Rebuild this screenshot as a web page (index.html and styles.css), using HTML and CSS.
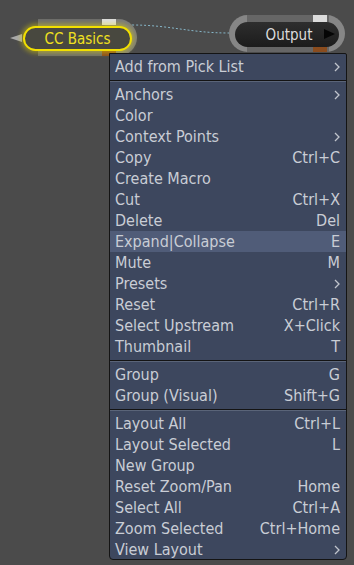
FILE: index.html
```html
<!DOCTYPE html>
<html lang="en">
<head>
    <meta charset="UTF-8">
    <title>Node Graph - Context Menu</title>
    <link rel="stylesheet" href="styles.css">
</head>
<body>
    <!-- Node graph canvas -->
    <div id="graph">
        <svg class="wire" width="354" height="60" viewBox="0 0 354 60">
            <path d="M132 25 C 170 25, 190 33, 229 33" />
        </svg>

        <!-- CC Basics node -->
        <div class="node node-fx">
            <div class="node-arrow"></div>
            <div class="node-back"></div>
            <div class="node-cap"></div>
            <div class="node-port port-in"></div>
            <div class="node-port port-out"></div>
            <div class="node-pill">CC Basics</div>
        </div>

        <!-- Output node -->
        <div class="node node-out">
            <div class="node-ring"></div>
            <div class="node-back"></div>
            <div class="node-port port-in"></div>
            <div class="node-port port-out"></div>
            <div class="node-pill">Output<span class="play"></span></div>
        </div>
    </div>

    <!-- Context menu -->
    <ul class="menu">
        <li class="item">Add from Pick List<svg class="sub" width="6" height="10" viewBox="0 0 6 10"><path d="M1 1 L5 5 L1 9"/></svg></li>
        <li class="sep"></li>
        <li class="item">Anchors<svg class="sub" width="6" height="10" viewBox="0 0 6 10"><path d="M1 1 L5 5 L1 9"/></svg></li>
        <li class="item">Color</li>
        <li class="item">Context Points<svg class="sub" width="6" height="10" viewBox="0 0 6 10"><path d="M1 1 L5 5 L1 9"/></svg></li>
        <li class="item">Copy<span class="key">Ctrl+C</span></li>
        <li class="item">Create Macro</li>
        <li class="item">Cut<span class="key">Ctrl+X</span></li>
        <li class="item">Delete<span class="key">Del</span></li>
        <li class="item active">Expand|Collapse<span class="key">E</span></li>
        <li class="item">Mute<span class="key">M</span></li>
        <li class="item">Presets<svg class="sub" width="6" height="10" viewBox="0 0 6 10"><path d="M1 1 L5 5 L1 9"/></svg></li>
        <li class="item">Reset<span class="key">Ctrl+R</span></li>
        <li class="item">Select Upstream<span class="key">X+Click</span></li>
        <li class="item">Thumbnail<span class="key">T</span></li>
        <li class="sep"></li>
        <li class="item">Group<span class="key">G</span></li>
        <li class="item">Group (Visual)<span class="key">Shift+G</span></li>
        <li class="sep"></li>
        <li class="item">Layout All<span class="key">Ctrl+L</span></li>
        <li class="item">Layout Selected<span class="key">L</span></li>
        <li class="item">New Group</li>
        <li class="item">Reset Zoom/Pan<span class="key">Home</span></li>
        <li class="item">Select All<span class="key">Ctrl+A</span></li>
        <li class="item">Zoom Selected<span class="key">Ctrl+Home</span></li>
        <li class="item">View Layout<svg class="sub" width="6" height="10" viewBox="0 0 6 10"><path d="M1 1 L5 5 L1 9"/></svg></li>
    </ul>
</body>
</html>
```

FILE: styles.css
```css
/* Canvas */
body {
    margin: 0;
    width: 354px;
    height: 565px;
    background-color: #4b4b4b;
    font-family: 'DejaVu Sans Condensed', 'DejaVu Sans', sans-serif;
    overflow: hidden;
    position: relative;
}

#graph {
    position: relative;
    height: 60px;
}

.wire {
    position: absolute;
    left: 0;
    top: 0;
}

.wire path {
    fill: none;
    stroke: #86b6c8;
    stroke-width: 1;
    stroke-dasharray: 2 2;
}

/* Nodes */
.node {
    position: absolute;
}

.node-back {
    position: absolute;
    background-color: #6c6c6c;
}

.node-port {
    position: absolute;
    width: 14px;
    height: 6px;
}

.port-in {
    background-color: #dcdcdc;
}

.port-out {
    background-color: #8a4c1e;
}

.node-pill {
    position: absolute;
    display: flex;
    align-items: center;
    justify-content: center;
    box-sizing: border-box;
    border-radius: 13px;
    font-size: 15px;
}

/* CC Basics node */
.node-fx {
    left: 10px;
    top: 19px;
    width: 126px;
    height: 37px;
}

.node-fx .node-arrow {
    position: absolute;
    left: 0;
    top: 15px;
    width: 0;
    height: 0;
    border-top: 4px solid transparent;
    border-bottom: 4px solid transparent;
    border-right: 12px solid #a8a8a8;
}

.node-fx .node-back {
    left: 28px;
    top: 0;
    width: 80px;
    height: 37px;
}

.node-fx .node-cap {
    position: absolute;
    left: 90px;
    top: 0;
    width: 37px;
    height: 37px;
    border-radius: 50%;
    background-color: #7a7a7a;
}

.node-fx .port-in {
    left: 92px;
    top: 0;
}

.node-fx .port-out {
    left: 92px;
    top: 31px;
}

.node-fx .node-pill {
    left: 13px;
    top: 7px;
    width: 109px;
    height: 25px;
    background-color: #48483f;
    border: 2px solid #f2e000;
    box-shadow: 0 0 5px 2px rgba(240, 224, 0, 0.45);
    color: #f0e020;
}

/* Output node */
.node-out {
    left: 229px;
    top: 15px;
    width: 116px;
    height: 37px;
}

.node-out .node-ring {
    position: absolute;
    inset: 0;
    border-radius: 19px;
    background-color: #868686;
}

.node-out .node-back {
    left: 18px;
    top: 0;
    width: 82px;
    height: 37px;
    background-color: #666;
}

.node-out .port-in {
    left: 84px;
    top: 0;
    height: 7px;
}

.node-out .port-out {
    left: 84px;
    top: 31px;
}

.node-out .node-pill {
    left: 6px;
    top: 7px;
    width: 104px;
    height: 25px;
    background: linear-gradient(#2e2e2e, #1c1c1c);
    color: #dcdcdc;
    padding-left: 4px;
}

.play {
    position: absolute;
    right: 4px;
    top: 7px;
    width: 0;
    height: 0;
    border-top: 5px solid transparent;
    border-bottom: 5px solid transparent;
    border-left: 11px solid #050505;
}

/* Context menu */
.menu {
    position: absolute;
    left: 109px;
    top: 53px;
    width: 238px;
    height: 507px;
    box-sizing: border-box;
    margin: 0;
    padding: 2px 0 0;
    list-style: none;
    background-color: #3d475e;
    border: 1px solid #141414;
    border-radius: 0 2px 4px 4px;
}

.item {
    display: flex;
    justify-content: space-between;
    align-items: center;
    height: 21px;
    padding: 0 6px 0 5px;
    font-size: 16px;
    color: #c9cdd5;
    white-space: nowrap;
}

.item.active {
    background-color: #505c78;
}

.sub {
    fill: none;
    stroke: #c0c4cc;
    stroke-width: 1.3;
    margin-right: 0;
}

.sep {
    height: 1px;
    margin: 3px 0 2px;
    background-color: #141414;
    border-bottom: 1px solid #5a6478;
}
```
